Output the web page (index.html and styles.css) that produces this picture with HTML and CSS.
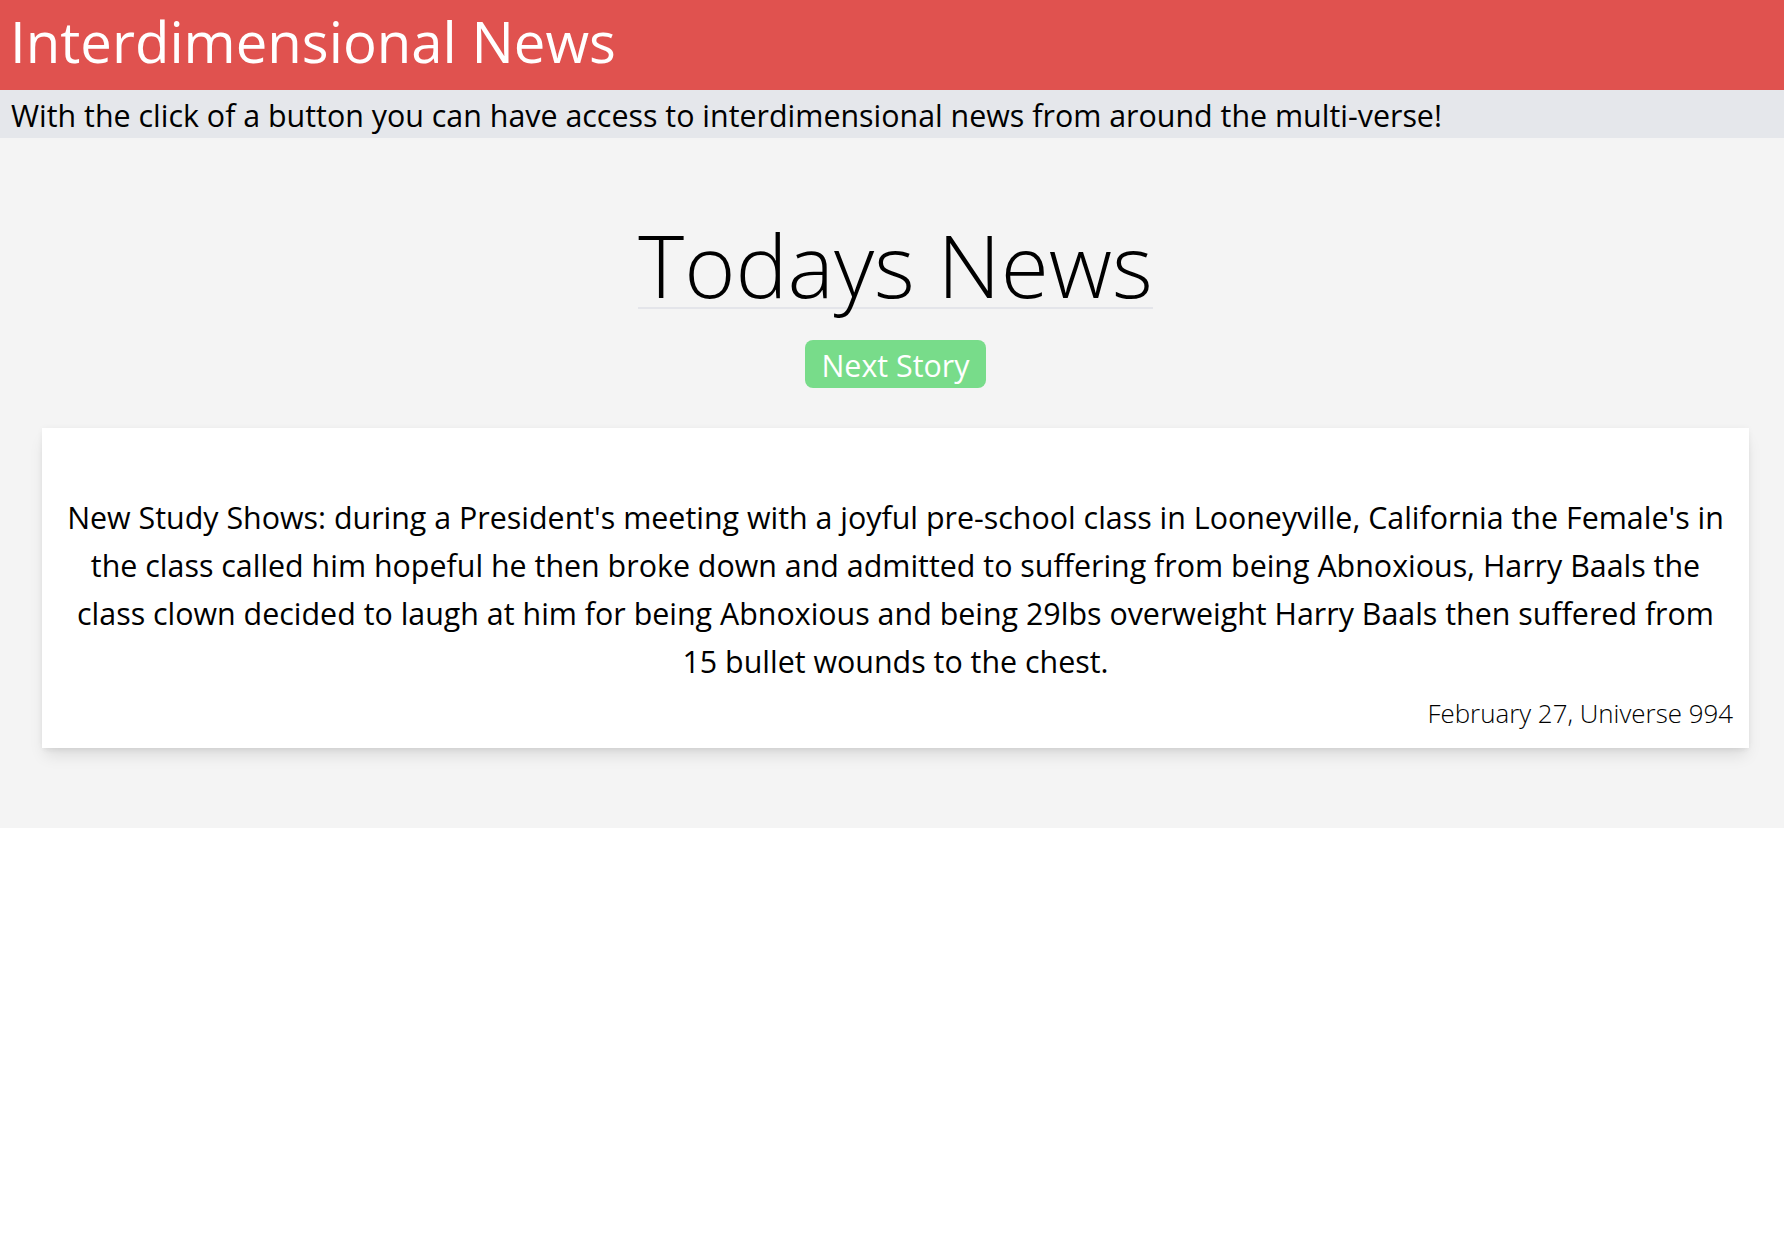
FILE: index.html
```html
<!DOCTYPE html>
<html lang="en">
<head>
<meta charset="utf-8">
<title>Interdimensional News</title>
<link rel="stylesheet" href="styles.css">
</head>
<body>
<header class="top-bar">
  <h1 class="site-title">Interdimensional News</h1>
</header>
<div class="tagline">With the click of a button you can have access to interdimensional news from around the multi-verse!</div>
<main class="news">
  <h2 class="news-heading">Todays News</h2>
  <button class="next-btn" type="button">Next Story</button>
  <article class="story-card">
    <p class="story-text">New Study Shows: during a President's meeting with a joyful pre-school class in Looneyville, California the Female's in the class called him hopeful he then broke down and admitted to suffering from being Abnoxious, Harry Baals the class clown decided to laugh at him for being Abnoxious and being 29lbs overweight Harry Baals then suffered from 15 bullet wounds to the chest.</p>
    <p class="story-date">February 27, Universe 994</p>
  </article>
</main>
</body>
</html>
```

FILE: styles.css
```css
* {
  box-sizing: border-box;
}

html, body {
  margin: 0;
  padding: 0;
  background: #ffffff;
}

body {
  font-family: "Open Sans", "Noto Sans", sans-serif;
  color: #000;
}

.top-bar {
  background: #e0524f;
  height: 90px;
  padding: 11px 10px 0;
}

.site-title {
  margin: 0;
  font-size: 56.3px;
  line-height: 60px;
  font-weight: 400;
  color: #ffffff;
}

.tagline {
  background: #e5e7eb;
  height: 48px;
  padding: 8px 11px 0;
  font-size: 30.4px;
  line-height: 36px;
  white-space: nowrap;
}

.news {
  background: #f4f4f4;
  display: flex;
  flex-direction: column;
  align-items: center;
  padding: 83px 0 80px 7px;
}

.news-heading {
  margin: 0;
  font-size: 87.5px;
  line-height: 86px;
  font-weight: 300;
  border-bottom: 2px solid #e4e5ea;
}

.next-btn {
  margin-top: 31px;
  background: #78dc8a;
  color: #ffffff;
  border: none;
  border-radius: 8px;
  padding: 8px 16px 4px;
  font-family: inherit;
  font-size: 30.4px;
  line-height: 36px;
  cursor: pointer;
}

.story-card {
  align-self: stretch;
  margin: 40px 35px 0;
  background: #ffffff;
  padding: 16px 16px 19px;
  box-shadow: 0 10px 15px -3px rgba(0, 0, 0, 0.1), 0 4px 6px -2px rgba(0, 0, 0, 0.05), 0 0 6px rgba(0, 0, 0, 0.04);
}

.story-text {
  margin: 50px 0 0;
  text-align: center;
  font-size: 30.4px;
  line-height: 48px;
}

.story-date {
  margin: 11px 0 0;
  text-align: right;
  font-size: 25.9px;
  line-height: 32px;
  font-weight: 300;
}
```
